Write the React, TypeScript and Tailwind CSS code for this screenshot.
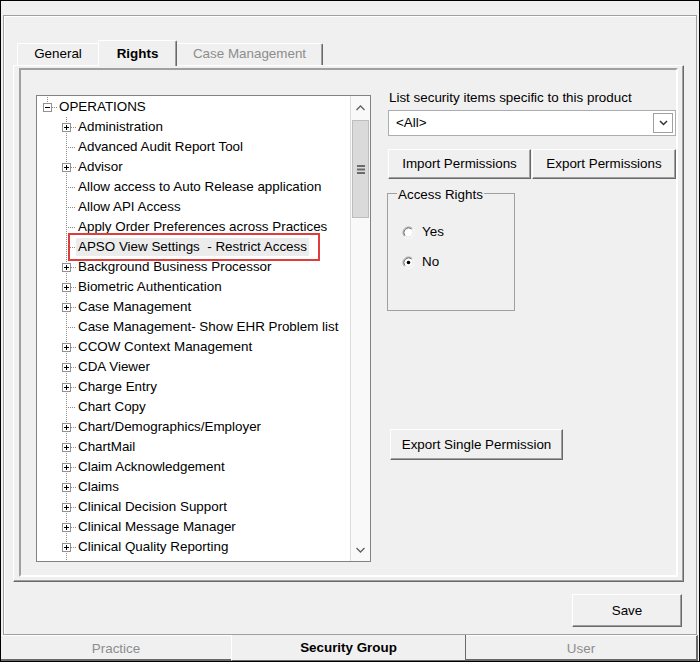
import React from 'react';

const items: [string, boolean][] = [
  ['Administration', true],
  ['Advanced Audit Report Tool', false],
  ['Advisor', true],
  ['Allow access to Auto Release application', false],
  ['Allow API Access', false],
  ['Apply Order Preferences across Practices', false],
  ['APSO View Settings  - Restrict Access', false],
  ['Background Business Processor', true],
  ['Biometric Authentication', true],
  ['Case Management', true],
  ['Case Management- Show EHR Problem list', false],
  ['CCOW Context Management', true],
  ['CDA Viewer', true],
  ['Charge Entry', true],
  ['Chart Copy', false],
  ['Chart/Demographics/Employer', true],
  ['ChartMail', true],
  ['Claim Acknowledgement', true],
  ['Claims', true],
  ['Clinical Decision Support', true],
  ['Clinical Message Manager', true],
  ['Clinical Quality Reporting', true],
  ['Communications Manager', true],
];

function TreeRow({ label, expandable, selected }: { label: string; expandable: boolean; selected: boolean }) {
  return (
    <div className="relative flex h-[20px] shrink-0 items-center">
      <svg width="39" height="20" className="shrink-0">
        <line x1="29.5" y1="0" x2="29.5" y2="20" stroke="#8c8c8c" strokeDasharray="1 1" />
        {expandable ? (
          <>
            <line x1="34" y1="10.5" x2="39" y2="10.5" stroke="#8c8c8c" strokeDasharray="1 1" />
            <rect x="25.5" y="6.5" width="8" height="8" fill="#ffffff" stroke="#919191" />
            <line x1="27" y1="10.5" x2="32" y2="10.5" stroke="#000000" />
            <line x1="29.5" y1="8" x2="29.5" y2="13" stroke="#000000" />
          </>
        ) : (
          <line x1="31" y1="10.5" x2="39" y2="10.5" stroke="#8c8c8c" strokeDasharray="1 1" />
        )}
      </svg>
      <span className={selected ? 'h-[18px] whitespace-pre bg-[#ececec] px-[2px] leading-[18px]' : 'h-[18px] whitespace-pre px-[2px] leading-[18px]'}>
        {label}
      </span>
      {selected && (
        <div className="pointer-events-none absolute left-[31px] top-[-4px] h-[28px] w-[252px] border-2 border-[#e23b3b]" />
      )}
    </div>
  );
}

function Radio({ checked }: { checked: boolean }) {
  return (
    <svg width="13" height="13" className="shrink-0">
      <circle cx="6.5" cy="6.5" r="5" fill="#ffffff" />
      <path d="M2.61 10.39 A5.5 5.5 0 0 1 10.39 2.61" fill="none" stroke="#a0a0a0" strokeWidth="1" />
      <path d="M10.39 2.61 A5.5 5.5 0 0 1 2.61 10.39" fill="none" stroke="#ffffff" strokeWidth="1" />
      <path d="M3.32 9.68 A4.5 4.5 0 0 1 9.68 3.32" fill="none" stroke="#696969" strokeWidth="1" />
      <path d="M9.68 3.32 A4.5 4.5 0 0 1 3.32 9.68" fill="none" stroke="#e3e3e3" strokeWidth="1" />
      {checked && <circle cx="6.5" cy="6.5" r="1.8" fill="#000000" />}
    </svg>
  );
}

const btn =
  'flex items-center justify-center border border-t-white border-l-white border-r-[#696969] border-b-[#696969] bg-[#f0f0f0] shadow-[inset_-1px_-1px_0_#a0a0a0]';

export default function App() {
  return (
    <div className="h-[662px] w-[700px] overflow-hidden border border-black bg-[#f0f0f0] font-['Liberation_Sans',Arial,sans-serif] text-[13.4px] leading-[16px] text-black">
      {/* outer frame */}
      <div className="ml-[2px] mt-[14px] flex h-[620px] w-[694px] flex-col border border-[#a0a0a0] shadow-[inset_1px_1px_0_#ffffff]">
        {/* tab strip */}
        <div className="ml-[13px] mt-[24px] flex h-[25px] items-end">
          <div className="flex h-[22px] w-[81px] items-center justify-center rounded-tl-[2px] border-l border-t border-white pb-[2px]">
            General
          </div>
          <div className="relative z-10 -mb-px flex h-[26px] w-[79px] items-center justify-center rounded-t-[2px] border-l border-r border-t border-l-white border-r-[#696969] border-t-white bg-[#f0f0f0] font-bold shadow-[inset_-1px_0_0_#a0a0a0]">
            Rights
          </div>
          <div className="flex h-[22px] w-[146px] items-center justify-center rounded-tr-[2px] border-r border-t border-r-[#696969] border-t-white pb-[2px] text-[#8d8d8d] shadow-[inset_-1px_0_0_#a0a0a0]">
            Case Management
          </div>
        </div>
        {/* tab panel */}
        <div className="ml-[9px] h-[517px] w-[671px] shrink-0 border-b border-l border-r border-t border-b-[#696969] border-l-white border-r-[#696969] border-t-white shadow-[inset_-1px_-1px_0_#a0a0a0]">
          <div className="ml-[5px] mt-[2px] flex h-[509px] w-[659px] items-start border-2 border-b-white border-l-[#a0a0a0] border-r-white border-t-[#a0a0a0]">
            {/* tree */}
            <div className="ml-[15px] mt-[25px] flex h-[467px] w-[335px] shrink-0 border border-[#828282] bg-white">
              <div className="flex flex-1 flex-col overflow-hidden pt-px">
                <div className="flex h-[20px] shrink-0 items-center">
                  <svg width="20" height="20" className="shrink-0">
                    <line x1="10.5" y1="0" x2="10.5" y2="6" stroke="#8c8c8c" strokeDasharray="1 1" />
                    <line x1="15" y1="10.5" x2="20" y2="10.5" stroke="#8c8c8c" strokeDasharray="1 1" />
                    <rect x="6.5" y="6.5" width="8" height="8" fill="#ffffff" stroke="#919191" />
                    <line x1="8" y1="10.5" x2="13" y2="10.5" stroke="#000000" />
                  </svg>
                  <span className="px-[2px] leading-[18px]">OPERATIONS</span>
                </div>
                {items.map(([label, exp], i) => (
                  <TreeRow key={label} label={label} expandable={exp} selected={i === 6} />
                ))}
              </div>
              {/* scrollbar */}
              <div className="flex w-[20px] shrink-0 flex-col border-l border-[#dcdcdc] bg-[#f9f9f9]">
                <div className="flex h-[24px] shrink-0 items-center justify-center">
                  <svg width="9" height="6">
                    <polyline points="0.5,5 4.5,1 8.5,5" fill="none" stroke="#606060" strokeWidth="1.3" />
                  </svg>
                </div>
                <div className="mx-px flex h-[98px] shrink-0 items-center justify-center border border-[#bdbdbd] bg-[#dadada]">
                  <svg width="8" height="9">
                    <rect x="0" y="0" width="8" height="2" fill="#6b6b6b" />
                    <rect x="0" y="3.5" width="8" height="2" fill="#6b6b6b" />
                    <rect x="0" y="7" width="8" height="2" fill="#6b6b6b" />
                  </svg>
                </div>
                <div className="flex-1" />
                <div className="flex h-[22px] shrink-0 items-center justify-center">
                  <svg width="9" height="6">
                    <polyline points="0.5,1 4.5,5 8.5,1" fill="none" stroke="#606060" strokeWidth="1.3" />
                  </svg>
                </div>
              </div>
            </div>
            {/* right column */}
            <div className="ml-[16px] mt-[20px] flex w-[289px] flex-col">
              <div className="ml-[2px] h-[16px] whitespace-nowrap">List security items specific to this product</div>
              <div className="ml-px mt-[4px] flex h-[26px] w-[288px] items-center border border-[#abadb3] bg-white">
                <span className="ml-[7px] flex-1">&lt;All&gt;</span>
                <div className="mr-[2px] flex h-[20px] w-[20px] items-center justify-center border border-[#a0a0a0] bg-white">
                  <svg width="9" height="6">
                    <polyline points="1,1 4.5,4.5 8,1" fill="none" stroke="#333333" strokeWidth="1.5" />
                  </svg>
                </div>
              </div>
              <div className="ml-px mt-[13px] flex gap-px">
                <div className={`${btn} h-[30px] w-[143px]`}>Import Permissions</div>
                <div className={`${btn} h-[30px] w-[144px]`}>Export Permissions</div>
              </div>
              <div className="relative mt-[14px] h-[118px] w-[128px] border border-[#a0a0a0]">
                <span className="absolute left-[9px] top-[-7px] bg-[#f0f0f0] px-px">Access Rights</span>
                <div className="ml-[14px] mt-[30px] flex h-[16px] items-center gap-[7px]">
                  <Radio checked={false} />
                  <span>Yes</span>
                </div>
                <div className="ml-[14px] mt-[14px] flex h-[16px] items-center gap-[7px]">
                  <Radio checked={true} />
                  <span>No</span>
                </div>
              </div>
              <div className={`${btn} ml-[3px] mt-[118px] h-[31px] w-[173px]`}>Export Single Permission</div>
            </div>
          </div>
        </div>
        {/* save */}
        <div className={`${btn} mr-[14px] mt-[12px] h-[33px] w-[110px] self-end`}>Save</div>
      </div>
      {/* bottom tabs */}
      <div className="flex h-[26px]">
        <div className="flex h-[26px] w-[230px] items-center justify-center border-b-2 border-t border-b-[#696969] border-t-white pt-[2px] text-[#8d8d8d]">
          Practice
        </div>
        <div className="flex h-[26px] w-[235px] items-center justify-center border-b border-l border-r border-b-[#696969] border-l-white border-r-[#696969] pt-px font-bold">
          Security Group
        </div>
        <div className="flex h-[26px] w-[232px] items-center justify-center border-b-2 border-r-2 border-t border-b-[#696969] border-r-[#696969] border-t-white pt-[2px] text-[#8d8d8d]">
          User
        </div>
      </div>
    </div>
  );
}
